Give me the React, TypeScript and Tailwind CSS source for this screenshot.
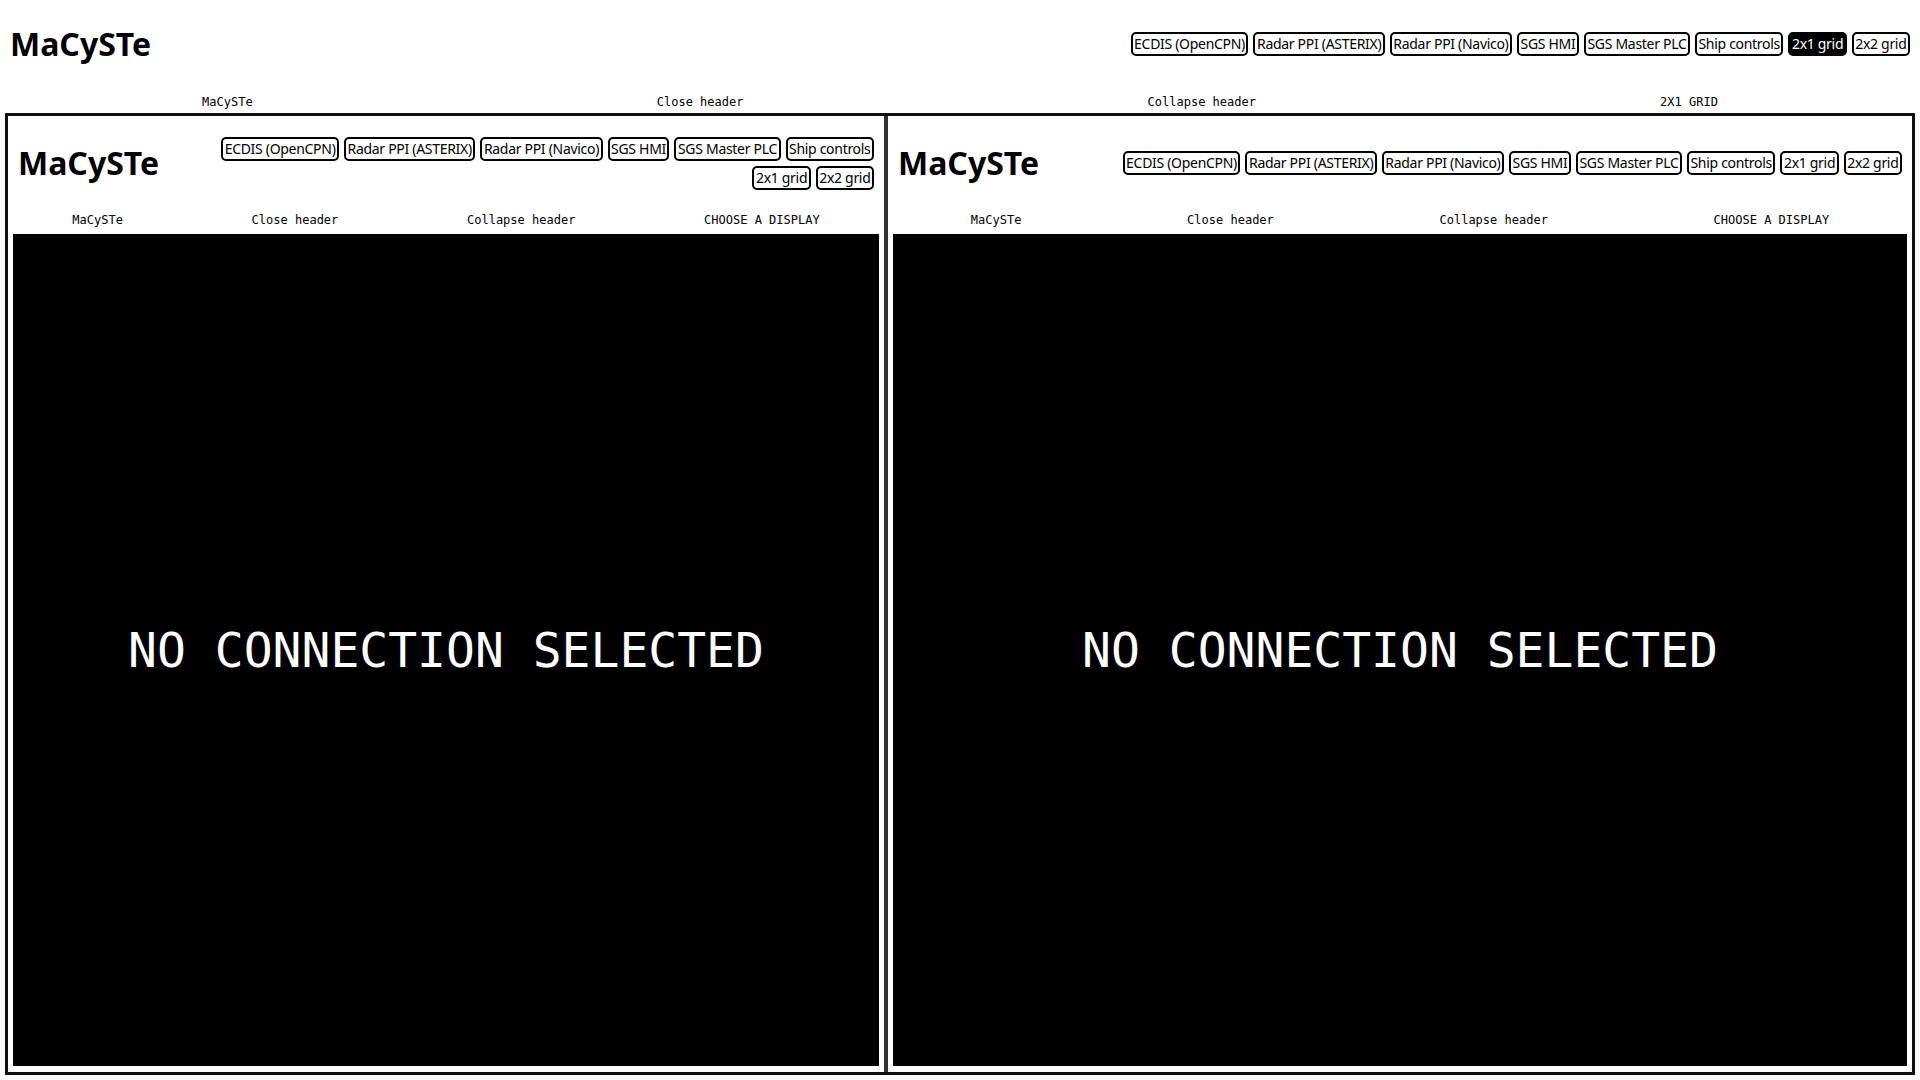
import React from 'react';

const DISPLAYS = [
  'ECDIS (OpenCPN)',
  'Radar PPI (ASTERIX)',
  'Radar PPI (Navico)',
  'SGS HMI',
  'SGS Master PLC',
  'Ship controls',
];

const LAYOUTS = ['2x1 grid', '2x2 grid'];

const NavButton: React.FC<{ label: string; active?: boolean }> = ({ label, active }) => (
  <button
    className={`h-[24px] px-[1.5px] border-2 border-black rounded-[5px] text-[14px] leading-[18px] font-['Noto_Sans',sans-serif] font-stretch-condensed tracking-[-0.3px] whitespace-nowrap ${
      active ? 'bg-black text-white' : 'bg-white text-black'
    }`}
  >
    {label}
  </button>
);

const Nav: React.FC<{ activeLayout?: string; className?: string }> = ({ activeLayout, className }) => (
  <nav className={`flex flex-wrap justify-end gap-x-[5px] gap-y-[5px] ${className ?? ''}`}>
    {DISPLAYS.map((d) => (
      <NavButton key={d} label={d} />
    ))}
    {LAYOUTS.map((l) => (
      <NavButton key={l} label={l} active={l === activeLayout} />
    ))}
  </nav>
);

const Title: React.FC = () => (
  <h1 className="m-0 text-[32px] leading-[48px] font-bold text-black font-['Noto_Sans',sans-serif] shrink-0">
    MaCySTe
  </h1>
);

const LabelRow: React.FC<{ last: string; className?: string }> = ({ last, className }) => (
  <div
    className={`flex justify-around items-start text-[12px] leading-[16px] text-black font-['DejaVu_Sans_Mono',monospace] ${className ?? ''}`}
  >
    <span>MaCySTe</span>
    <span>Close header</span>
    <span>Collapse header</span>
    <span>{last}</span>
  </div>
);

const Panel: React.FC<{ className?: string; navClassName?: string }> = ({ className, navClassName }) => (
  <section className={`flex flex-col p-[5px] pb-[6px] ${className ?? ''}`}>
    <header className="h-[86px] flex items-center justify-between px-[5px] pb-[2px]">
      <Title />
      <Nav className={navClassName} />
    </header>
    <LabelRow last="CHOOSE A DISPLAY" className="h-[27px] pt-[5px] -mx-[5px]" />
    <div className="flex-1 bg-black flex items-center justify-center">
      <span className="text-white text-[48px] leading-none font-['DejaVu_Sans_Mono',monospace] whitespace-nowrap">
        NO CONNECTION SELECTED
      </span>
    </div>
  </section>
);

export default function App() {
  return (
    <div className="w-[1920px] h-[1080px] bg-white overflow-hidden">
      <header className="h-[91px] flex items-center justify-between px-[10px] pb-[4px]">
        <Title />
        <Nav activeLayout="2x1 grid" />
      </header>
      <LabelRow last="2X1 GRID" className="h-[22px] pt-[3px]" />
      <main className="mx-[5px] h-[962px] border-[3px] border-[#111] flex">
        <Panel className="w-[876px] shrink-0" navClassName="w-[664px]" />
        <Panel className="flex-1 border-l-4 border-[#333]" />
      </main>
    </div>
  );
}
